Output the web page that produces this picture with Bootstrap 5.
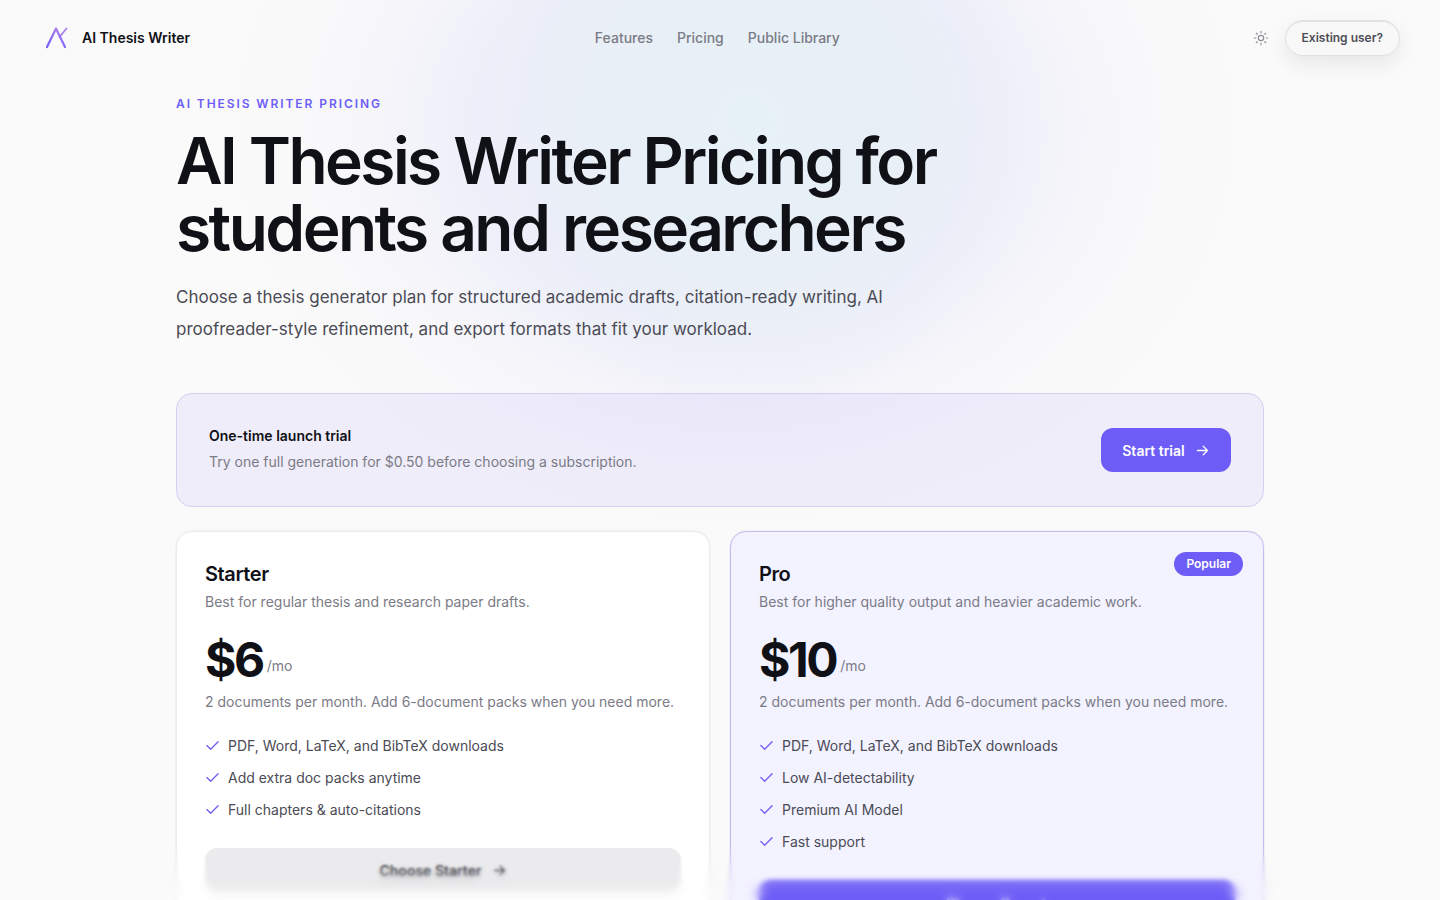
<!DOCTYPE html>
<html lang="en">
<head>
<meta charset="utf-8">
<meta name="viewport" content="width=device-width, initial-scale=1">
<title>AI Thesis Writer Pricing</title>
<link href="https://cdn.jsdelivr.net/npm/bootstrap@5.3.0/dist/css/bootstrap.min.css" rel="stylesheet">
<style>
:root{--ink:#101117;--soft:#4b4b55;--muted:#7b7b86;--brand:#6d5df6}
body{font-family:Inter,"Liberation Sans",sans-serif;font-size:14px;line-height:20px;color:var(--ink);background:#fafafa;text-rendering:optimizeSpeed;font-kerning:normal}
.glow{inset:0;height:100vh;z-index:-1;background:
 radial-gradient(ellipse 290px 290px at 52% 120px,rgba(230,242,246,.9),rgba(230,240,246,.7) 50%,rgba(234,237,247,0) 100%),
 radial-gradient(ellipse 510px 400px at 51% 130px,rgba(235,235,248,.95),rgba(236,236,249,.85) 50%,rgba(245,245,251,.4) 78%,rgba(250,250,250,0) 100%)}
.topbar{height:76px;padding:0 40px}
.brand{color:var(--ink);font-weight:600;gap:12px}
.topnav a{color:var(--muted);font-weight:500}
.tools{gap:8px}
.theme{width:32px;height:32px;color:#8f8f98;line-height:0}
.user{height:36px;padding:0 16px;font-size:12px;font-weight:600;color:#4d4d55;border:1px solid #e2e2e4;background:#f8f8f9;box-shadow:0 8px 20px rgba(0,0,0,.08),inset 0 1px 0 #e2e2e4}
.page{max-width:1152px;padding:20px 32px 60px}
.eyebrow{font-size:12px;line-height:16px;font-weight:600;letter-spacing:.16em;color:var(--brand);margin-bottom:15px}
.title{max-width:900px;font-size:64px;line-height:67px;font-weight:600;letter-spacing:-.04em;margin-bottom:20px}
.intro{max-width:768px;font-size:17px;line-height:32px;color:var(--soft);margin-bottom:48px}
.panel{border-radius:16px}
.trial{min-height:114px;padding:24px 32px;border:1px solid #d5d0f3;background:rgba(109,93,246,.08);margin-bottom:24px}
.trial .muted-text{line-height:24px}
.muted-text{color:var(--muted)}
.strong-btn{height:44px;min-width:130px;padding:0 20px;border-radius:12px;font-size:14px;font-weight:600;gap:10px}
.strong-btn.fill,.pop{background:var(--brand);color:#fff}
.strong-btn.plain{background:#ebebed;color:#3a3a42}
.plans{--bs-gutter-x:20px;--bs-gutter-y:20px}
.plan{padding:28px;border:1px solid #ececee;background:#fff;box-shadow:0 0 0 1px rgba(0,0,0,.03)}
.plan.pro{border-color:#c3bcf1;background:#f3f2ff}
.plan h2{font-size:20px;line-height:28px;font-weight:600;letter-spacing:-.02em;margin-bottom:4px}
.pop{top:20px;right:20px;padding:4px 12px;font-size:12px;line-height:16px;font-weight:600}
.price{font-size:48px;line-height:48px;font-weight:700;letter-spacing:-.05em}
.feats{color:var(--soft)}
.feats li{line-height:20px;margin-bottom:12px}
.feats svg{color:var(--brand);margin-top:2px}
.fade-edge{height:100px;pointer-events:none}
.fade-edge i{position:absolute;inset:0}
.fade-edge .b1{backdrop-filter:blur(1px);mask-image:linear-gradient(transparent 48%,#000 66%);-webkit-mask-image:linear-gradient(transparent 48%,#000 66%)}
.fade-edge .b2{backdrop-filter:blur(2px);mask-image:linear-gradient(transparent 62%,#000 80%);-webkit-mask-image:linear-gradient(transparent 62%,#000 80%)}
.fade-edge .b3{backdrop-filter:blur(6px);mask-image:linear-gradient(transparent 76%,#000 94%);-webkit-mask-image:linear-gradient(transparent 76%,#000 94%)}
</style>
</head>
<body>
<div class="glow position-absolute"></div>
<header class="topbar d-flex align-items-center justify-content-between">
  <a href="#" class="brand d-flex align-items-center text-decoration-none">
    <svg width="30" height="28" viewBox="0 0 30 28" fill="none" stroke="url(#lg)" stroke-linecap="round" stroke-linejoin="round" aria-hidden="true"><defs><linearGradient id="lg" gradientUnits="userSpaceOnUse" x1="20" y1="4" x2="10" y2="25"><stop stop-color="#b07ff0"/><stop offset="1" stop-color="#6d5df6"/></linearGradient></defs><path stroke-width="2.200" d="M7 23 16 4.500 25 23"/><path stroke-width="1.800" d="M19.500 13 26.500 4.500"/></svg>
    <span>AI Thesis Writer</span>
  </a>
  <nav class="topnav d-none d-md-flex gap-4">
    <a href="#" class="text-decoration-none">Features</a><a href="#" class="text-decoration-none">Pricing</a><a href="#" class="text-decoration-none">Public Library</a>
  </nav>
  <div class="tools d-flex align-items-center justify-content-end">
    <button type="button" class="theme btn p-0 border-0" aria-label="Toggle theme"><svg width="16" height="16" viewBox="0 0 24 24" fill="none" stroke="currentColor" stroke-width="1.800" stroke-linecap="round"><circle cx="12" cy="12" r="4"/><path d="M12 2v2M12 20v2M4.930 4.930l1.410 1.410M17.660 17.660l1.410 1.410M2 12h2M20 12h2M6.340 17.660l-1.410 1.410M19.070 4.930l-1.410 1.410"/></svg></button>
    <button type="button" class="user btn rounded-pill">Existing user?</button>
  </div>
</header>
<svg class="d-none"><symbol id="arrow" viewBox="0 0 24 24"><path d="M4 12h16M13 5l7 7-7 7" fill="none" stroke="currentColor" stroke-width="2.200" stroke-linecap="round" stroke-linejoin="round"/></symbol><symbol id="check" viewBox="0 0 24 24"><path d="M3 12l6 6L21 6" fill="none" stroke="currentColor" stroke-width="2" stroke-linecap="round" stroke-linejoin="round"/></symbol></svg>
<main class="page container-fluid">
  <p class="eyebrow">AI THESIS WRITER PRICING</p>
  <h1 class="title">AI Thesis Writer Pricing for students and researchers</h1>
  <p class="intro">Choose a thesis generator plan for structured academic drafts, citation-ready writing, AI proofreader-style refinement, and export formats that fit your workload.</p>
  <section class="trial panel d-flex flex-wrap align-items-center justify-content-between gap-3">
    <div><div class="fw-semibold mb-1">One-time launch trial</div><div class="muted-text">Try one full generation for $0.50 before choosing a subscription.</div></div>
    <button type="button" class="strong-btn fill btn border-0 d-flex align-items-center justify-content-center">Start trial <svg width="15" height="15"><use href="#arrow"/></svg></button>
  </section>
  <div class="plans row row-cols-1 row-cols-md-2">
    <div class="col"><section class="plan panel h-100 d-flex flex-column">
      <h2>Starter</h2><p class="muted-text mb-4">Best for regular thesis and research paper drafts.</p>
      <div class="d-flex align-items-end gap-1 mb-2"><span class="price">$6</span><span class="muted-text pb-2">/mo</span></div>
      <p class="muted-text mb-4">2 documents per month. Add 6-document packs when you need more.</p>
      <ul class="feats list-unstyled mb-3">
        <li class="d-flex gap-2"><svg width="15" height="15"><use href="#check"/></svg><span>PDF, Word, LaTeX, and BibTeX downloads</span></li>
        <li class="d-flex gap-2"><svg width="15" height="15"><use href="#check"/></svg><span>Add extra doc packs anytime</span></li>
        <li class="d-flex gap-2"><svg width="15" height="15"><use href="#check"/></svg><span>Full chapters &amp; auto-citations</span></li>
      </ul>
      <button type="button" class="strong-btn plain btn border-0 w-100 d-flex align-items-center justify-content-center">Choose Starter <svg width="15" height="15"><use href="#arrow"/></svg></button>
    </section></div>
    <div class="col"><section class="plan pro panel h-100 position-relative d-flex flex-column">
      <span class="pop rounded-pill position-absolute">Popular</span>
      <h2>Pro</h2><p class="muted-text mb-4">Best for higher quality output and heavier academic work.</p>
      <div class="d-flex align-items-end gap-1 mb-2"><span class="price">$10</span><span class="muted-text pb-2">/mo</span></div>
      <p class="muted-text mb-4">2 documents per month. Add 6-document packs when you need more.</p>
      <ul class="feats list-unstyled mb-3">
        <li class="d-flex gap-2"><svg width="15" height="15"><use href="#check"/></svg><span>PDF, Word, LaTeX, and BibTeX downloads</span></li>
        <li class="d-flex gap-2"><svg width="15" height="15"><use href="#check"/></svg><span>Low AI-detectability</span></li>
        <li class="d-flex gap-2"><svg width="15" height="15"><use href="#check"/></svg><span>Premium AI Model</span></li>
        <li class="d-flex gap-2"><svg width="15" height="15"><use href="#check"/></svg><span>Fast support</span></li>
      </ul>
      <button type="button" class="strong-btn fill btn border-0 w-100 d-flex align-items-center justify-content-center">Choose Pro <svg width="15" height="15"><use href="#arrow"/></svg></button>
    </section></div>
  </div>
</main>
<div class="fade-edge fixed-bottom"><i class="b1"></i><i class="b2"></i><i class="b3"></i></div>
<script src="https://cdn.jsdelivr.net/npm/bootstrap@5.3.0/dist/js/bootstrap.bundle.min.js"></script>
</body>
</html>
